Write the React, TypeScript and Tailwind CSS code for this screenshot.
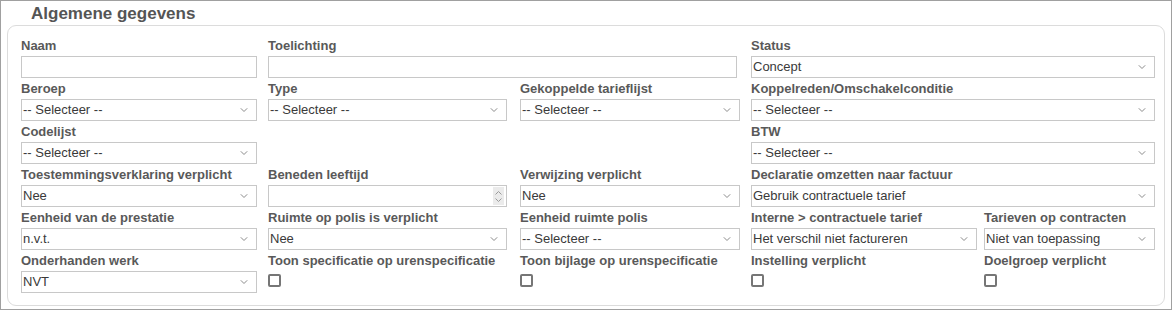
import React from 'react';

const font = { fontFamily: '"Liberation Sans", Arial, sans-serif' };

function Chevron() {
  return (
    <svg width="8" height="5" viewBox="0 0 8 5" className="absolute right-[8px] top-1/2 -translate-y-1/2">
      <path d="M0.8 0.8 L4 4 L7.2 0.8" fill="none" stroke="#8a8a8a" strokeWidth="1" />
    </svg>
  );
}

function Label({ children }: { children: React.ReactNode }) {
  return (
    <div className="h-[21px] pt-[3px] text-[13px] leading-[15px] font-bold text-[#595959] whitespace-nowrap">
      {children}
    </div>
  );
}

function Select({ value, w }: { value: string; w: string }) {
  return (
    <div className={`relative h-[22px] ${w} border border-[#c8c8c8] bg-white flex items-center pl-px text-[13px] text-[#3a3a3a] whitespace-nowrap`}>
      {value}
      <Chevron />
    </div>
  );
}

function TextInput({ w }: { w: string }) {
  return <div className={`h-[22px] ${w} border border-[#c8c8c8] bg-white`} />;
}

function NumberInput({ w }: { w: string }) {
  return (
    <div className={`relative h-[22px] ${w} border border-[#c8c8c8] bg-white`}>
      <div className="absolute right-[2px] top-[1px] bottom-[1px] w-[11px] bg-[#ebebeb] flex flex-col items-center justify-center gap-[3px]">
        <svg width="7" height="4" viewBox="0 0 7 4">
          <path d="M0.5 3.5 L3.5 0.5 L6.5 3.5" fill="none" stroke="#9a9a9a" strokeWidth="1" />
        </svg>
        <svg width="7" height="4" viewBox="0 0 7 4">
          <path d="M0.5 0.5 L3.5 3.5 L6.5 0.5" fill="none" stroke="#9a9a9a" strokeWidth="1" />
        </svg>
      </div>
    </div>
  );
}

function Check() {
  return <div className="mt-[3px] w-[13px] h-[13px] border-2 border-[#767676] rounded-[2px] bg-white" />;
}

interface CellProps {
  label: string;
  span?: string;
  children: React.ReactNode;
}

function Cell({ label, span = '', children }: CellProps) {
  return (
    <div className={`flex flex-col h-[43px] ${span}`}>
      <Label>{label}</Label>
      {children}
    </div>
  );
}

export default function App() {
  return (
    <div style={font} className="w-[1172px] h-[310px] border border-[#a0a0a0] bg-white pt-[3px]">
      <div className="h-[20px] leading-[20px] pl-[30px] text-[17px] font-bold text-[#555]">Algemene gegevens</div>
      <div className="mt-px mx-[6px] h-[281px] border border-[#dcdcdc] rounded-[9px] pt-[9px] pl-[13px]">
        <div className="grid grid-cols-[247px_252px_231px_233px_171px]">
          <Cell label="Naam"><TextInput w="w-[236px]" /></Cell>
          <Cell label="Toelichting" span="col-span-2"><TextInput w="w-[469px]" /></Cell>
          <Cell label="Status" span="col-span-2"><Select value="Concept" w="w-[404px]" /></Cell>

          <Cell label="Beroep"><Select value="-- Selecteer --" w="w-[236px]" /></Cell>
          <Cell label="Type"><Select value="-- Selecteer --" w="w-[239px]" /></Cell>
          <Cell label="Gekoppelde tarieflijst"><Select value="-- Selecteer --" w="w-[220px]" /></Cell>
          <Cell label="Koppelreden/Omschakelconditie" span="col-span-2"><Select value="-- Selecteer --" w="w-[404px]" /></Cell>

          <Cell label="Codelijst"><Select value="-- Selecteer --" w="w-[236px]" /></Cell>
          <div className="col-span-2" />
          <Cell label="BTW" span="col-span-2"><Select value="-- Selecteer --" w="w-[404px]" /></Cell>

          <Cell label="Toestemmingsverklaring verplicht"><Select value="Nee" w="w-[236px]" /></Cell>
          <Cell label="Beneden leeftijd"><NumberInput w="w-[239px]" /></Cell>
          <Cell label="Verwijzing verplicht"><Select value="Nee" w="w-[220px]" /></Cell>
          <Cell label="Declaratie omzetten naar factuur" span="col-span-2"><Select value="Gebruik contractuele tarief" w="w-[404px]" /></Cell>

          <Cell label="Eenheid van de prestatie"><Select value="n.v.t." w="w-[236px]" /></Cell>
          <Cell label="Ruimte op polis is verplicht"><Select value="Nee" w="w-[239px]" /></Cell>
          <Cell label="Eenheid ruimte polis"><Select value="-- Selecteer --" w="w-[220px]" /></Cell>
          <Cell label="Interne > contractuele tarief"><Select value="Het verschil niet factureren" w="w-[226px]" /></Cell>
          <Cell label="Tarieven op contracten"><Select value="Niet van toepassing" w="w-[171px]" /></Cell>

          <Cell label="Onderhanden werk"><Select value="NVT" w="w-[236px]" /></Cell>
          <Cell label="Toon specificatie op urenspecificatie"><Check /></Cell>
          <Cell label="Toon bijlage op urenspecificatie"><Check /></Cell>
          <Cell label="Instelling verplicht"><Check /></Cell>
          <Cell label="Doelgroep verplicht"><Check /></Cell>
        </div>
      </div>
    </div>
  );
}
